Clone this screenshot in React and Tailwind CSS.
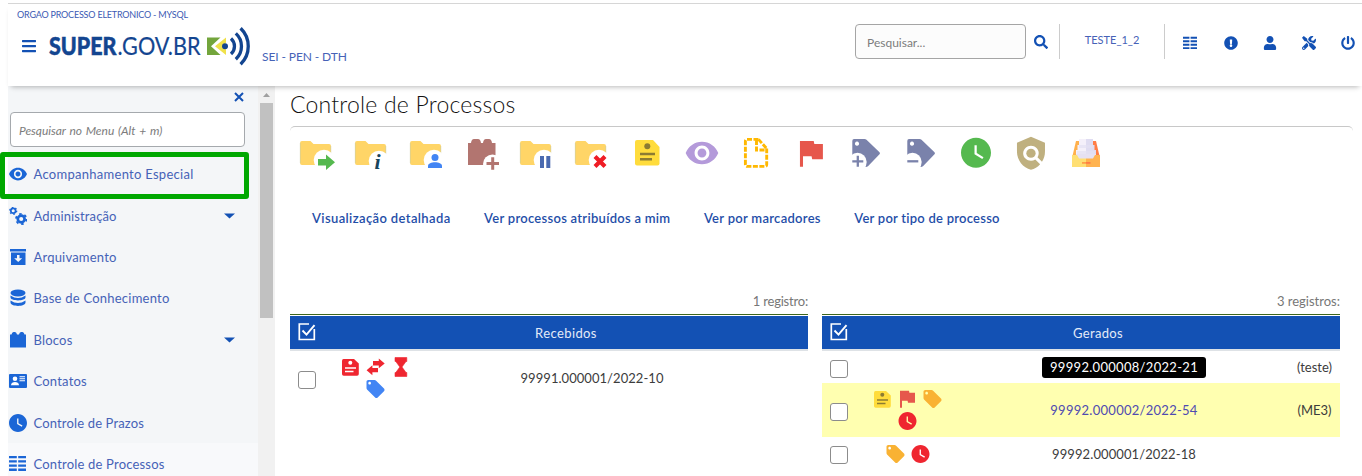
import { FaBars, FaSearch, FaExclamationCircle, FaUser, FaTools, FaPowerOff } from "react-icons/fa";

const EYE = "M12 4.5C7 4.5 2.73 7.61 1 12c1.73 4.39 6 7.5 11 7.5s9.27-3.11 11-7.5c-1.73-4.39-6-7.5-11-7.5zM12 17c-2.76 0-5-2.24-5-5s2.24-5 5-5 5 2.24 5 5-2.24 5-5 5zm0-8c-1.66 0-3 1.34-3 3s1.34 3 3 3 3-1.34 3-3-1.34-3-3-3z";
const CLOCK = "M12 2C6.5 2 2 6.5 2 12s4.5 10 10 10 10-4.5 10-10S17.5 2 12 2zm4.2 14.2L11 13V7h1.5v5.2l4.5 2.7-.8 1.3z";
const FLAG = "M14.4 6L14 4H5v17h2v-7h5.6l.4 2h7V6z";
const TAG = "M21.41 11.58l-9-9C12.05 2.22 11.55 2 11 2H4c-1.1 0-2 .9-2 2v7c0 .55.22 1.05.59 1.42l9 9c.36.36.86.58 1.41.58.55 0 1.05-.22 1.41-.59l7-7c.37-.36.59-.86.59-1.41 0-.55-.23-1.06-.59-1.42zM5.5 7C4.67 7 4 6.33 4 5.5S4.67 4 5.5 4 7 4.67 7 5.5 6.33 7 5.5 7z";
const SHIELD = "M21 5l-9-4-9 4v6c0 5.55 3.84 10.74 9 12 2.3-.56 4.33-1.9 5.88-3.71l-3.12-3.12c-1.94 1.29-4.58 1.07-6.29-.64-1.95-1.95-1.95-5.12 0-7.07 1.95-1.95 5.12-1.95 7.07 0 1.71 1.71 1.92 4.35.64 6.29l2.9 2.9C20.29 15.69 21 13.38 21 11V5z";

function Logo() {
  return (
    <svg width="206" height="42" viewBox="0 0 206 42" className="block">
      <g fill="#134590" className="font-['Lato',sans-serif]">
        <text x="1" y="31" fontSize="25" fontWeight="900" stroke="#134590" strokeWidth="0.5" textLength="67.500" lengthAdjust="spacingAndGlyphs">SUPER</text>
        <text x="69.500" y="31" fontSize="25" fontWeight="400" stroke="#134590" strokeWidth="0.2" textLength="83" lengthAdjust="spacingAndGlyphs">.GOV.BR</text>
      </g>
      <path d="M159 13.500h13.500L163 22.200l9.500 8.800H159z" fill="#73a53c" />
      <path d="M178 13.500v5.500l-4 3.300 4 3.300v5.500L167 22.200z" fill="#f0e14a" />
      <circle cx="177" cy="22.300" r="3" fill="#134590" />
      <g fill="none" stroke="#134590" strokeWidth="3.300">
        <path d="M183 14.500a10.500 10.500 0 0 1 0 15.600" />
        <path d="M187.800 9.400a17.500 17.500 0 0 1 0 25.800" />
        <path d="M192.600 4.300a25 25 0 0 1 0 36" />
      </g>
    </svg>
  );
}

function ListIcon({ size }) {
  return (
    <svg width={size} height={size} viewBox="0 0 17 17" fill="currentColor" className="block">
      {[1, 5.2, 9.4, 13.6].map((y) => (
        <path key={y} d={`M0 ${y}h7.800v2.300H0zM9.200 ${y}h7.800v2.300H9.200z`} />
      ))}
    </svg>
  );
}

function Header() {
  return (
    <header className="relative z-10 ml-2 flex h-[83px] items-start border-t border-[#d6d6d6] bg-white shadow-[0_4px_5px_-3px_rgba(0,0,0,0.28)]">
      <div className="flex flex-col">
        <div className="ml-[9px] mt-[5px] h-3 whitespace-nowrap text-[9px] leading-3 tracking-[-0.2px] text-[#3b5ab3]">ORGAO PROCESSO ELETRONICO - MYSQL</div>
        <div className="flex items-start">
          <FaBars className="ml-[13px] mt-[17px] size-4 text-[#1351b4]" />
          <div className="ml-[11px] mt-[3px]"><Logo /></div>
          <div className="ml-2 mt-[28px] whitespace-nowrap text-xs leading-4 tracking-[-0.1px] text-[#4662b7]">SEI - PEN - DTH</div>
        </div>
      </div>
      <div className="ml-auto mt-5 flex h-[35px] items-center text-[#1351b4]">
        <div className="flex h-[35px] w-[171px] items-center rounded-[4px] border border-[#a5a5a5] bg-[#fcfcfc] pl-[11px] pt-0.5 text-[12px] text-[#7c7c7c]">Pesquisar...</div>
        <FaSearch className="ml-2 size-3.5" />
        <div className="ml-[11px] flex h-[35px] w-[106px] justify-center border-x border-[#ccc] pt-2 text-[11px] leading-4 text-[#4662b7]">TESTE_1_2</div>
        <div className="ml-[18px] flex h-[35px] items-center pt-0.5">
          <ListIcon size={14} />
          <FaExclamationCircle className="ml-[27px] size-3.5" />
          <FaUser className="ml-[25px] size-[14px]" />
          <FaTools className="ml-[25px] size-3.5" />
          <FaPowerOff className="ml-[25px] mr-[7px] size-3.5" />
        </div>
      </div>
    </header>
  );
}

function MenuSvg({ children }) {
  return <svg width="18" height="18" viewBox="0 0 18 18" fill="currentColor" className="block">{children}</svg>;
}

const menu = [
  { t: "Acompanhamento Especial", s: "tracking-[0.28px]", icon: <MenuSvg><path d={EYE} transform="translate(-.85 -1.200) scale(.82 .85)" /></MenuSvg> },
  { t: "Administração", s: "tracking-[0.12px]", more: true, icon: (
    <MenuSvg>
      <g fill="none" stroke="currentColor">
        <circle cx="4.200" cy="3.800" r="2.400" strokeWidth="1.700" />
        <circle cx="4.200" cy="3.800" r="3.500" strokeWidth="1.300" strokeDasharray="1.600 2.065" />
        <circle cx="12.200" cy="12" r="3.400" strokeWidth="2.700" />
        <circle cx="12.200" cy="12" r="5.200" strokeWidth="1.800" strokeDasharray="2.500 2.945" />
      </g>
    </MenuSvg>) },
  { t: "Arquivamento", s: "tracking-[0.2px]", icon: <MenuSvg><path fillRule="evenodd" d="M1 1h16v2.600H1zM2 4.600h14.500V17H2zM8 7v3.200H5.200L9.200 14l4-3.800h-2.700V7z" /></MenuSvg> },
  { t: "Base de Conhecimento", s: "tracking-[0.23px]", icon: (
    <MenuSvg>
      <ellipse cx="9" cy="4" rx="7.500" ry="3.400" />
      <path d="M1.500 6.500q7.500 5 15 0v1.800c0 4.200-15 4.200-15 0zM1.500 11.500q7.500 5 15 0v2c0 4.500-15 4.500-15 0z" />
    </MenuSvg>) },
  { t: "Blocos", s: "tracking-[0.2px]", more: true, icon: <MenuSvg><path d="M1 3.500h1.500q.5-2.500 2-2.500h1.500q1.500 0 2 2.500h2q.5-2.500 2-2.500h1.500q1.500 0 2 2.500H17V16.500H1z" /></MenuSvg> },
  { t: "Contatos", s: "tracking-[0.2px]", icon: (
    <MenuSvg>
      <rect x="0" y="2" width="18" height="14" rx="1" />
      <g fill="#fff"><circle cx="6" cy="6.800" r="2.300" /><path d="M2 13.300c0-4.300 8-4.300 8 0zM10.500 4.200h5.500v1h-5.500zM10.500 6.200h5.500v1h-5.500zM10.500 8.200h5.500v1h-5.500z" /></g>
    </MenuSvg>) },
  { t: "Controle de Prazos", s: "tracking-[0.15px]", icon: <MenuSvg><path d={CLOCK} transform="translate(-1.800 -1.800) scale(.9)" /></MenuSvg> },
  { t: "Controle de Processos", s: "tracking-[0.19px]", on: true, icon: <ListIcon size={17} /> },
];

function Sidebar() {
  return (
    <aside className="ml-2 flex w-[267px] shrink-0">
      <div className="relative w-[250px] bg-[#f4f6f8]">
        <div className="flex h-[26px] items-center justify-end pr-[14px]">
          <svg width="10" height="10" viewBox="0 0 10 10" className="-mt-1"><path d="M1 1l8 8M9 1L1 9" stroke="#1351b4" strokeWidth="2" /></svg>
        </div>
        <div className="ml-0.5 flex h-[35px] w-[235px] items-center rounded-[4px] border border-[#a5a9ad] bg-white pl-2 pt-0.5 text-[12px] italic tracking-[-0.04px] text-[#7c7c7c] [word-spacing:1px]">Pesquisar no Menu (Alt + m)</div>
        <div className="pt-[6.500px]">
          {menu.map((m) => (
            <div key={m.t} className={`flex h-[41.4px] items-center pl-[1px] text-[#1b66d6] ${m.on ? "bg-[#f8f9fb]" : ""}`}>
              <span className="w-[18px]">{m.icon}</span>
              <span className={`ml-[6.500px] whitespace-nowrap pt-[1.500px] text-[13px] text-[#4662b7] ${m.s}`}>{m.t}</span>
              {m.more && <svg width="11" height="6" viewBox="0 0 11 6" className="ml-auto mr-[23px]"><path d="M0 .5h11L5.500 5.500z" fill="#1351b4" /></svg>}
            </div>
          ))}
        </div>
        <div className="absolute -left-2 top-[66px] h-[47px] w-[249px] rounded-[3px] border-[5px] border-[#00a800]" />
      </div>
      <div className="flex w-[17px] flex-col items-center bg-[#f1f1f1]">
        <svg width="17" height="17" viewBox="0 0 17 17"><path d="M5 11l3.500-4 3.500 4z" fill="#a0a0a0" /></svg>
        <div className="h-[215px] w-[13px] bg-[#c1c1c1]" />
      </div>
    </aside>
  );
}

function Folder({ cx = 34, cy = 26, children }) {
  return (
    <>
      <path d="M12 7h8.500l3 3H39q2 0 2 2v17q0 2-2 2H12q-2 0-2-2V9q0-2 2-2z" fill="#ffd567" />
      <path d="M40.800 12v17M10.300 9v20" stroke="#c9cfa6" strokeWidth=".6" />
      <circle cx={cx} cy={cy} r="10.300" fill="#fff" />
      {children}
    </>
  );
}

function BigTag({ plus }) {
  return (
    <>
      <path fillRule="evenodd" d="M14 5h10.500q1.200 0 2 .8L39.500 18.300q1 1 0 2L28.200 32q-1 1-2.500 1L12.300 21V7q0-2 1.700-2zM17 7.600a2.100 2.100 0 1 0 .01 0z" fill="#7a82ab" />
      <circle cx="17.500" cy="28" r="9.200" fill="#fff" />
      <path d={plus ? "M12.300 27.300h11M17.800 21.800v11" : "M12.300 27.300h11"} stroke="#7a82ab" strokeWidth="2.300" />
    </>
  );
}

const tools = [
  <Folder><path d="M28 25h8v-4.500l9 7.800-9 7.800v-4.600h-8z" fill="#55b94f" /></Folder>,
  <Folder cy={27}><text x="29.500" y="35" fontSize="22" fontWeight="700" fontStyle="italic" fill="#17445c" className="font-['Liberation_Serif',serif]">i</text></Folder>,
  <Folder><circle cx="35" cy="23.500" r="3.500" fill="#4285f4" /><path d="M28 34v-2c0-5 14-5 14 0v2z" fill="#4285f4" /></Folder>,
  <>
    <path d="M13 9h3q.5-4 3-4h4q2.500 0 3 4h2q.5-4 3-4h3q2.500 0 3 4h3.500v22H13z" fill="#b27570" />
    <circle cx="37.500" cy="30" r="9.500" fill="#fff" />
    <path d="M31.500 29.500h12.500M37.700 23.300v12.500" stroke="#b27570" strokeWidth="3" />
  </>,
  <Folder><path d="M30 22h4v12h-4zM36.300 22h4v12h-4z" fill="#4a6ab0" /></Folder>,
  <Folder><path d="M30 22.500l10 10M40 22.500l-10 10" stroke="#ef1c25" strokeWidth="4.200" /></Folder>,
  <>
    <path d="M17 6h16l6.500 7v16.500q0 2-2 2H17q-2 0-2-2V8q0-2 2-2z" fill="#ffdc3c" />
    <circle cx="27.300" cy="12.200" r="3" fill="#8c7b32" />
    <path d="M20 18.700h15v2.600H20zM20 24h12v2.600H20z" fill="#8c7b32" />
  </>,
  <path d={EYE} transform="translate(9.200 1) scale(1.482 1.500)" fill="#b49ada" />,
  <g fill="none" stroke="#ffb800" strokeWidth="2.900" strokeDasharray="5 1.500">
    <path d="M28.500 5.400H17q-1.600 0-1.600 2v23q0 2 1.600 2h18q1.700 0 1.700-2V14.500" />
    <path d="M28.500 5.400L36.700 14.500M26.500 6v10H37" />
  </g>,
  <path d={FLAG} transform="translate(7.300 1) scale(1.530 1.510)" fill="#e6574c" />,
  <BigTag plus />,
  <BigTag />,
  <path d={CLOCK} transform="translate(8 .8) scale(1.500)" fill="#55b94f" />,
  <g transform="translate(7.300 1.200) scale(1.556 1.500)" fill="#bfb07f"><path d={SHIELD} /><circle cx="12" cy="12" r="3" /></g>,
  <>
    <path d="M16 7h4v17h-8z" fill="#ffb04c" /><path d="M32 7h4l4 17h-8z" fill="#ff7d47" />
    <path d="M19 5h7v17H16v-6h1.500v-5H19z" fill="#f4f0fa" /><path d="M26 5h7v6h1.500v5H36v6H26z" fill="#dfdcf1" />
    <path d="M19 11h14v3H19zM17 17h18v3H17z" fill="#e2dff2" opacity=".7" />
    <path d="M16 20h20v5H16z" fill="#e6e1f2" />
    <path d="M12 21h5l2 3.500h7V33H12z" fill="#ffdf73" /><path d="M26 24.500h7l2-3.500h5v12H26z" fill="#ffb350" />
    <path d="M22 28h4v1.800h-4z" fill="#ffa048" /><path d="M26 28h4.500v1.800H26z" fill="#ff7d47" />
  </>,
];

function Small({ kind, color }) {
  const shapes = {
    note: (
      <>
        <path d="M5.500 3h10.500l4.800 4.500v10.500q0 1.700-1.700 1.700H5.700q-1.700 0-1.700-1.700V4.700Q4 3 5.500 3z" fill={color} />
        <g fill={color === "#ef2630" ? "#fff" : "#8c7b32"}><circle cx="12.300" cy="6.700" r="2" /><path d="M7 11.200h11v1.600H7zM7 14.700h8.500v1.600H7z" /></g>
      </>
    ),
    arrows: <path d="M10 5.100h5.800V2.500l5.900 4.900-5.900 4.900V9.400H10zM15 12v4.200H9.400v3L3.600 14.300l5.800-5V12z" fill={color} />,
    hour: <path d="M7 1.500h11.800v4h-.8L14 11l4 5.500h.8v4H7v-4h.8l4-5.500-4-5.500H7z" fill={color} stroke={color} strokeWidth=".6" />,
    tag: <path d={TAG} transform="translate(1.700 .2) scale(.9)" fill={color} />,
    flag: <path d={FLAG} transform="translate(0 -1.200) scale(1)" fill={color} />,
    clock: <path d={CLOCK} transform="translate(1.700 .2) scale(.9)" fill={color} />,
  };
  return <svg width="25" height="22" viewBox="0 0 25 22" className="block">{shapes[kind]}</svg>;
}

function Check() {
  return <span className="block size-[18px] rounded-[3px] border border-[#8c8c8c] bg-white" />;
}

function Panel({ count, countSpacing, title, titleSpacing, rows }) {
  return (
    <section className="w-[518px]">
      <div className={`h-[27px] pt-px text-right text-[13px] leading-7 text-[#777] ${countSpacing}`}>{count}</div>
      <div className="mt-px h-px bg-[#3d661c]" />
      <div className="mt-px flex h-[33px] items-center bg-[#1351b4] text-white">
        <svg width="34" height="33" viewBox="0 0 34 33" fill="none" stroke="#fff" strokeWidth="1.700">
          <path d="M19 8H9.300v15.500h15V13" /><path d="M12.500 14.500l4 4.200 8-9.500" strokeWidth="1.900" />
        </svg>
        <span className={`flex-1 pt-0.5 text-center text-[13px] text-[#e3ebf8] ${titleSpacing}`}>{title}</span>
      </div>
      <div className="h-0.5 bg-[#dee2e6]" />
      {rows.map((r) => (
        <div key={r.n} className={`grid grid-cols-[34px_103px_330px_51px] items-center ${r.h} ${r.bg || ""}`}>
          <div className="pl-2 pt-[3px]"><Check /></div>
          <div>
            {r.icons.map((line, i) => (
              <div key={i} className="flex justify-center">{line.map(([k, c]) => <Small key={k} kind={k} color={c} />)}</div>
            ))}
          </div>
          <div className="flex justify-center whitespace-nowrap text-[13px]"><span className={r.style}>{r.n}</span></div>
          <div className="whitespace-nowrap pt-0.5 text-center text-[13px] text-[#3c3c3c]">{r.user}</div>
        </div>
      ))}
    </section>
  );
}

const RED = "#ef2630";

export default function App() {
  return (
    <div className="h-[476px] w-[1362px] overflow-hidden bg-white pt-[3px] font-['Lato',sans-serif]">
      <Header />
      <div className="flex h-[390px]">
        <Sidebar />
        <main className="ml-[15px] flex-1">
          <h1 className="h-10 pt-[3px] text-[23px] font-light leading-[30px] tracking-[0.2px] text-[#111]">Controle de Processos</h1>
          <div className="mr-[9px] h-2 rounded-t-[5px] border-t border-[#c8c8c8]" />
          <div className="flex">
            {tools.map((t, i) => <svg key={i} width="55" height="40" viewBox="0 0 55 40" className="block">{t}</svg>)}
          </div>
          <nav className="ml-[22px] mt-[34px] flex h-5 gap-[33.500px] whitespace-nowrap text-[13px] font-semibold leading-5 text-[#1f4ea8]">
            <a className="tracking-[0.38px]">Visualização detalhada</a>
            <a className="tracking-[0.28px]">Ver processos atribuídos a mim</a>
            <a className="tracking-[0.29px]">Ver por marcadores</a>
            <a className="tracking-[0.24px]">Ver por tipo de processo</a>
          </nav>
          <div className="mt-[58px] flex gap-[14px]">
            <Panel count="1 registro:" countSpacing="tracking-[-0.2px]" title="Recebidos" titleSpacing="tracking-[0.4px]" rows={[
              { n: "99991.000001/2022-10", h: "h-[54px]", style: "pt-0.5 text-[#3c3c3c] tracking-[0.05px]", icons: [[["note", RED], ["arrows", RED], ["hour", RED]], [["tag", "#4285f4"]]] },
            ]} />
            <Panel count="3 registros:" countSpacing="tracking-normal" title="Gerados" titleSpacing="tracking-[0.3px]" rows={[
              { n: "99992.000008/2022-21", user: "(teste)", h: "h-8", style: "rounded-[3px] bg-black px-2 leading-[21px] text-white tracking-[0.3px]", icons: [] },
              { n: "99992.000002/2022-54", user: "(ME3)", h: "h-[54px]", bg: "bg-[#ffffb0]", style: "pt-0.5 text-[#4f4bb0] tracking-[0.27px]", icons: [[["note", "#ffdc3c"], ["flag", "#e6574c"], ["tag", "#f9b233"]], [["clock", RED]]] },
              { n: "99992.000001/2022-18", h: "h-[33px]", style: "pt-0.5 text-[#3c3c3c] tracking-[0.1px]", icons: [[["tag", "#f9b233"], ["clock", RED]]] },
            ]} />
          </div>
        </main>
      </div>
    </div>
  );
}
